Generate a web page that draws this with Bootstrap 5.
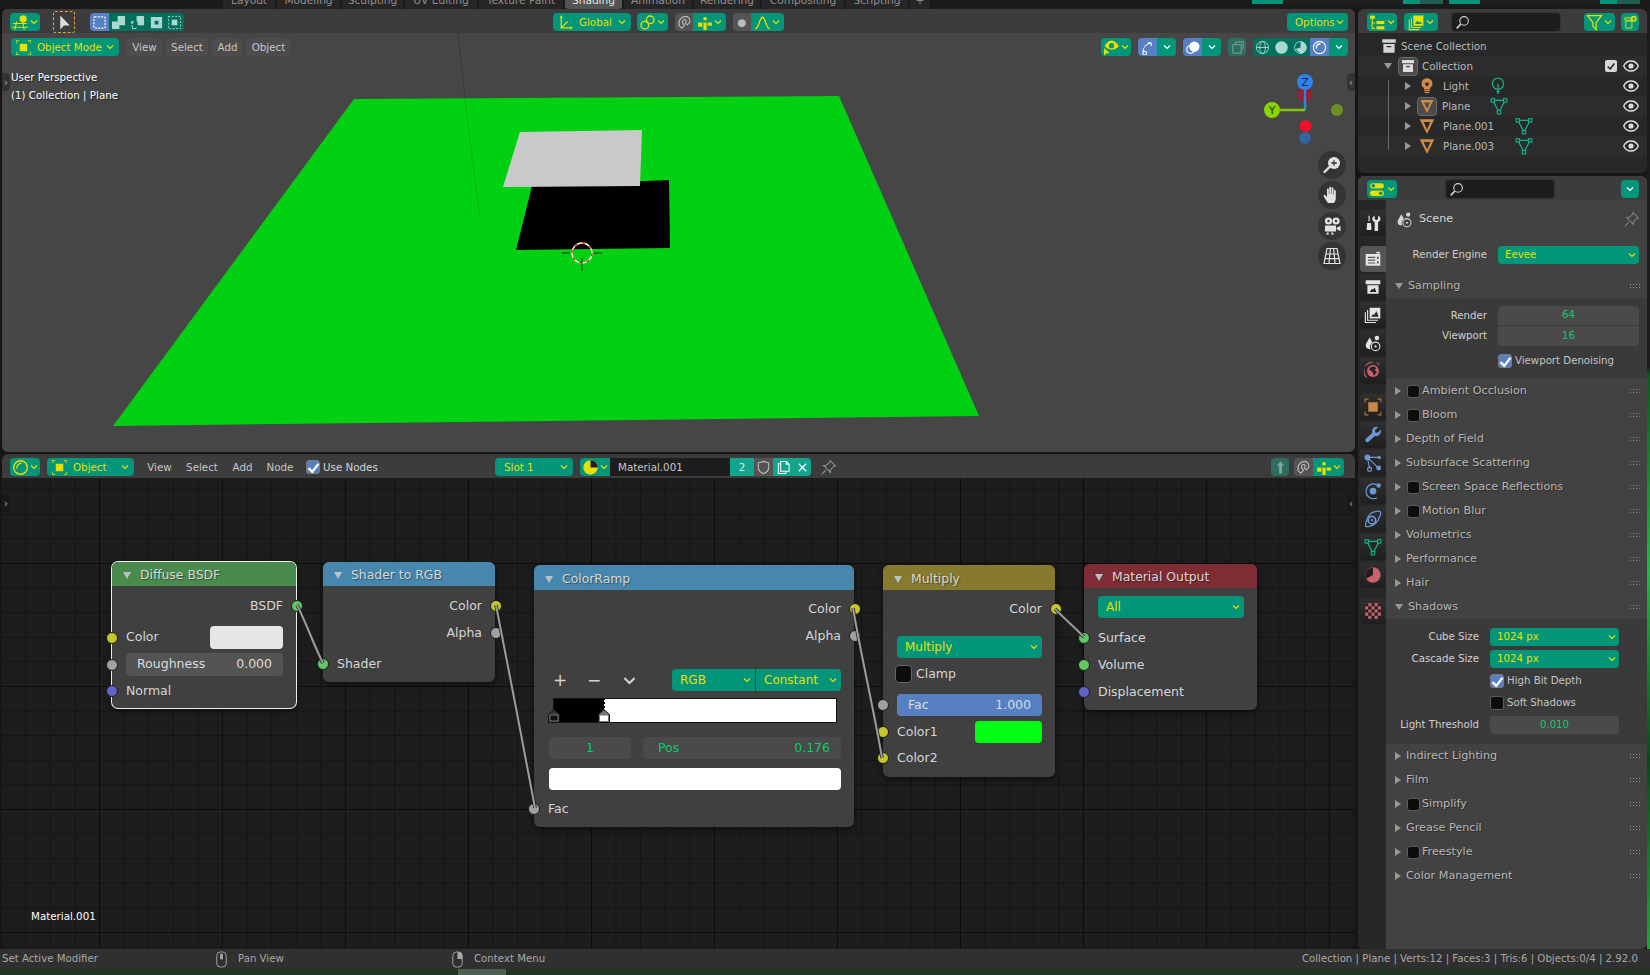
<!doctype html>
<html lang="en">

<head>
    <meta charset="utf-8">
    <title>Blender - Shading</title>
    <link href="https://cdn.jsdelivr.net/npm/bootstrap@5.3.5/dist/css/bootstrap.min.css" rel="stylesheet">
    <style>
        html, body { height: 100%; overflow: hidden; }
        body { background: #161616; font-family: "DejaVu Sans", sans-serif; font-size: 10.3px; color: #c4c4c4; line-height: 1; }
        .app { width: 1650px; height: 975px; }

        /* top bar */
        .topbar { height: 9px; background: #1b1b1b; overflow: hidden; position: relative; padding-left: 223px; }
        .wtab { height: 9px; display: flex; justify-content: center; align-items: flex-end; color: #8f8f8f; background: #262626; margin-right: 2px; border-radius: 0 0 3px 3px; padding-bottom: 3px; font-size: 10.6px; white-space: nowrap; }
        .wtab-on { background: #545454; color: #e2e2e2; }
        .tw1 { width: 52px; } .tw2 { width: 63px; } .tw3 { width: 61px; } .tw4 { width: 72px; } .tw5 { width: 84px; } .tw6 { width: 57px; } .tw7 { width: 68px; } .tw8 { width: 66px; } .tw9 { width: 82px; } .tw10 { width: 62px; }
        .scenebox { position: absolute; top: 0; height: 4px; display: flex; }
        .scb-a { left: 1252px; } .scb-b { left: 1449px; }
        .scenebox i { display: block; height: 4px; }
        .sc1 { width: 31px; background: #01967a; } .sc2 { width: 120px; background: #1d1d1d; } .sc3 { width: 17px; background: #01967a; } .sc4 { width: 23px; background: #1f5f50; }

        /* areas */
        .work { height: 940px; }
        .leftcol { width: 1353px; margin-left: 2px; margin-right: 3px; }
        .rightcol { width: 289px; }
        .edge-r { width: 3px; background: linear-gradient(#1c1c1c 0, #1c1c1c 38%, #0b5a1d 39%, #1bbd3f 60%, #0a4a18 80%, #1aa838 100%); }
        .area { border-radius: 6px; overflow: hidden; position: relative; }
        .a-view { height: 443px; background: #464646; }
        .a-node { height: 495px; margin-top: 2px; background: #1d1d1d; }
        .a-out { height: 164px; background: #282828; }
        .a-prop { height: 773px; margin-top: 3px; background: #424242; }
        .hd { height: 24px; padding-top: 4px; background: #3c3c3c; display: flex; align-items: flex-start; position: relative; }
        .row2 { height: 18px; margin-top: 5px; display: flex; align-items: center; position: relative; z-index: 2; }

        /* small header widgets */
        .tb { display: inline-flex; align-items: center; justify-content: center; height: 18px; background: #01967a; border-radius: 4px; color: #e8e000; flex: none; white-space: nowrap; }
        .tb-d { background: #006f5b; }
        .tb-dim { background: #2f6d60; color: #7fa89f; }
        .tb-b { background: #5680c2; color: #fff; }
        .tb-g { background: #545454; color: #bbb; }
        .tb-w { color: #fff; }
        .tb-l { border-radius: 4px 0 0 4px; }
        .tb-r { border-radius: 0 4px 4px 0; }
        .tb-m { border-radius: 0; }
        .spread { justify-content: space-between; padding: 0 4px 0 4px; }
        .spread span { margin-right: auto; margin-left: 5px; }
        .mn { display: inline-flex; align-items: center; justify-content: center; height: 18px; border-radius: 4px; color: #c6c6c6; background: #4c4c4c; flex: none; white-space: nowrap; }
        .mn-plain { background: transparent; }
        .ic { width: 17px; height: 17px; flex: none; display: block; }
        .ic-s { width: 15px; height: 15px; flex: none; display: block; }
        .chev { width: 10px; height: 10px; flex: none; display: block; }
        .sel-ic { color: #a8d8cf; }
        .curbox { width: 22px; height: 22px; margin-top: -2px; border: 1px dashed #e8a33a; border-radius: 2px; display: flex; align-items: center; justify-content: center; flex: none; color: #ddd; }

        /* widths and gaps between header widgets */
        .w18 { width: 18px; } .w19 { width: 19px; } .w20 { width: 20px; } .w24 { width: 24px; } .w30 { width: 30px; } .w31 { width: 31px; } .w33 { width: 33px; } .w34 { width: 34px; } .w37 { width: 37px; } .w38 { width: 38px; } .w42 { width: 42px; } .w45 { width: 45px; } .w58 { width: 58px; } .w61 { width: 61px; } .w78 { width: 78px; } .w87 { width: 87px; } .w108 { width: 108px; }
        .ml3 { margin-left: 3px; } .ml4 { margin-left: 4px; } .ml5 { margin-left: 5px; } .ml6 { margin-left: 6px; } .ml7 { margin-left: 7px; } .ml8 { margin-left: 8px; } .ml9 { margin-left: 9px; } .ml13 { margin-left: 13px; } .ml15 { margin-left: 15px; }
        .ml369 { margin-left: 369px; } .pl8 { padding-left: 8px; } .pl9 { padding-left: 9px; }
        .mr6 { margin-right: 6px; }
        .options-b { margin-left: 503px; padding-left: 8px; }
        .vis-b { margin-left: 810px; }
        .slot-b { width: 78px; margin-left: 114px; }
        .slot-b span { margin-left: 5px; }
        .use-l { justify-content: flex-start; color: #d4d4d4; }
        .matname { width: 120px; height: 18px; background: #1d1d1d; color: #c8c8c8; display: flex; align-items: center; padding-left: 8px; flex: none; }
        .num-u { background: #12a58c; color: #d8f0ea; }
        .mat-b { background: #12a58c; color: #fff; }
        .pin-c { color: #8a8a8a; }
        .up-b { margin-left: 434px; }
        .filt-b { margin-left: 23px; }
        .prop-s { margin-left: 48px; }
        .prop-c { margin-left: 66px; }

        .vtext { position: absolute; left: 9px; top: 59px; color: #fff; line-height: 18px; z-index: 2; text-shadow: 1px 1px 1px rgba(0,0,0,.5); }
        .scene3d { position: absolute; left: 0; top: 0; width: 1356px; height: 443px; }
        .navbtns { position: absolute; left: 1316px; top: 142px; z-index: 2; display: flex; flex-direction: column; gap: 2.4px; }
        .navb { width: 28px; height: 28px; border-radius: 50%; background: #343434; display: flex; align-items: center; justify-content: center; color: #e2e2e2; }
        .navb svg { width: 20px; height: 20px; display: block; }
        .sidetab { position: absolute; width: 8px; height: 18px; background: #333; color: #aaa; display: flex; align-items: center; justify-content: center; font-size: 11px; z-index: 2; }
        .st-l { left: 0; border-radius: 0 4px 4px 0; }
        .st-r { right: 0; border-radius: 4px 0 0 4px; }
        .st-v { top: 64px; }
        .st-n { top: 16px; background: #191919; }

        /* node editor */
        .canvas { position: absolute; left: 0; top: 24px; right: 0; bottom: 0; background-color: #1d1d1d;
            background-image: linear-gradient(#0d0d0d 1px, transparent 1px), linear-gradient(90deg, #0d0d0d 1px, transparent 1px), linear-gradient(#141414 1px, transparent 1px), linear-gradient(90deg, #141414 1px, transparent 1px);
            background-size: 123px 123px, 123px 123px, 24.6px 24.6px, 24.6px 24.6px;
            background-position: 0 85px, 97px 0, 0 11.2px, 23.2px 0; }
        .links { position: absolute; left: 0; top: 0; width: 1356px; height: 471px; z-index: 2; }
        .nd { position: absolute; background: #404040; border-radius: 6px; box-shadow: 0 2px 7px rgba(0,0,0,.55); font-size: 12.5px; color: #d6d6d6; z-index: 1; }
        .nd-sel { box-shadow: 0 0 0 1px #e8efe8, 0 2px 7px rgba(0,0,0,.55); }
        .nh { display: flex; align-items: center; color: #d8d8d8; padding-left: 11px; padding-top: 3px; border-radius: 6px 6px 0 0; font-size: 12.4px; text-shadow: 1px 1px 1px rgba(0,0,0,.4); }
        .nh24 { height: 24px; } .nh25 { height: 25px; }
        .tri-nd { width: 0; height: 0; border-left: 4.5px solid transparent; border-right: 4.5px solid transparent; border-top: 7px solid #b6c2c6; margin-right: 9px; flex: none; }
        .hg { background: #4a8a4c; } .hb { background: #4786ad; } .hy { background: #857a2d; } .hr { background: #7f2c35; }
        .nr { position: relative; height: 22px; display: flex; align-items: center; padding: 0 13px 0 14px; }
        .nr-end { justify-content: flex-end; }
        .sock { position: absolute; width: 12px; height: 12px; border-radius: 50%; border: 1px solid #1c1c1c; top: 50%; margin-top: -6px; z-index: 3; }
        .sl { left: -6px; } .sr { right: -7px; }
        .sy { background: #c7c729; } .sg { background: #a1a1a1; } .sb { background: #6363c7; } .sn { background: #63c763; }
        .nd-diff { left: 110px; top: 84px; width: 184px; height: 146px; }
        .nd-s2r { left: 321px; top: 84px; width: 172px; height: 120px; }
        .nd-ramp { left: 532px; top: 87px; width: 320px; height: 262px; }
        .nd-mul { left: 881px; top: 87px; width: 172px; height: 212px; }
        .nd-mat { left: 1082px; top: 86px; width: 173px; height: 146px; }
        .pt9 { padding-top: 9px; } .pt8 { padding-top: 8px; } .pt7 { padding-top: 7px; }
        .mt4p { margin-top: 4px; } .mt5p { margin-top: 5px; } .mt6p { margin-top: 6px; } .mt7p { margin-top: 7px; } .mt8p { margin-top: 8px; } .mt9p { margin-top: 9px; } .mt10p { margin-top: 10px; } .mt11p { margin-top: 11px; } .mt14p { margin-top: 14px; } .mt16p { margin-top: 16px; } .mt22p { margin-top: 22px; } .mt2n { margin-top: 2px; }
        .swatch { margin-left: auto; border-radius: 4px; height: 100%; }
        .sw-w { width: 73px; background: #e6e6e6; }
        .sw-g { width: 67px; background: #00ff12; }
        .h23 { height: 23px; }
        .fld { flex: 1; display: flex; justify-content: space-between; align-items: center; height: 100%; padding: 0 11px; background: #545454; border-radius: 4px; color: #dcdcdc; }
        .fld-b { background: #5680c2; }
        .fld-g { background: #4a4a4a; color: #12c86e; }
        .nsel { display: flex; align-items: center; justify-content: space-between; height: 22px; background: #01967a; color: #e8e000; border-radius: 4px; padding: 0 3px 0 8px; flex: 1; font-size: 12px; }
        .rampbtns { height: 23px; display: flex; align-items: center; padding: 0 13px 0 19px; color: #d2d2d2; }
        .rb { width: 34px; font-size: 17px; display: flex; justify-content: flex-start; }
        .rampsel { display: flex; margin-left: auto; height: 23px; }
        .rs1 { width: 83px; border-radius: 4px 0 0 4px; margin-right: 1px; flex: none; }
        .rs2 { width: 85px; border-radius: 0 4px 4px 0; flex: none; }
        .ramp { height: 25px; margin-left: 19px; margin-right: 17px; position: relative; background: linear-gradient(90deg, #000 0, #000 50px, #fff 50px); border: 1px solid #111; }
        .ramp-handles { position: absolute; left: -6px; top: -1px; height: 25px; width: 296px; }
        .rampfields { height: 22px; display: flex; padding: 0 13px 0 15px; gap: 12px; }
        .rf1 { width: 82px; flex: none; justify-content: center; }
        .pos-f { flex: 1; padding: 0 11px 0 15px; }
        .whitebar { height: 22px; margin-left: 15px; margin-right: 13px; background: #fff; border-radius: 4px; }
        .clamp { height: 18px; padding-left: 12px; }
        .cb-n { width: 17px; height: 18px; background: #0d0d0d; border: 1px solid #666; border-radius: 4px; margin-right: 4px; flex: none; }
        .mb-name { position: absolute; left: 29px; top: 433px; color: #fff; z-index: 2; }

        /* outliner */
        .ol-rows { padding-top: 3px; position: relative; }
        .ol { height: 20px; display: flex; align-items: center; position: relative; color: #b9b9b9; }
        .ol .ic { width: 18px; height: 18px; }
        .ol-alt { background: #2c2c2c; }
        .ol-s { padding-left: 22px; }
        .ol-a { padding-left: 26px; }
        .ol-c { padding-left: 47px; }
        .tri-r { width: 0; height: 0; border-top: 4.5px solid transparent; border-bottom: 4.5px solid transparent; border-left: 6px solid #999; flex: none; }
        .tri-d { width: 0; height: 0; border-left: 4.5px solid transparent; border-right: 4.5px solid transparent; border-top: 6px solid #999; flex: none; }
        .hl-ic { width: 20px; height: 19px; border-radius: 4px; background: #4b4b4b; border: 1px solid #6b6b6b; display: flex; align-items: center; justify-content: center; flex: none; color: #ddd; }
        .hl-ic .ic-s { width: 16px; height: 16px; }
        .on1 { width: 33px; } .on2 { width: 35px; } .on3 { width: 59px; }
        .ol .ol-end { position: absolute; left: 264px; top: 1px; color: #dcdcdc; }
        .ol-chk { position: absolute; left: 247px; top: 4px; width: 12px; height: 12px; background: #d8d8d8; border-radius: 2px; color: #222; display: flex; align-items: center; justify-content: center; }
        .ol-line { position: absolute; left: 30px; top: 47px; height: 70px; width: 1px; background: #6a6a6a; }
        .o-plane { color: #d18a45; } .o-mesh { color: #12b48c; }
        .wht { color: #d4d4d4; }
        .srch { background: #1d1d1d; border: 1px solid #333; border-radius: 4px; height: 20px; margin-top: -1px; display: flex; align-items: center; padding-left: 3px; color: #d2d2d2; flex: none; width: 110px; }

        /* properties */
        .propbody { height: 749px; display: flex; }
        .tabs { width: 28px; flex: none; background: #272727; padding-top: 10px; padding-left: 2px; }
        .pt { width: 26px; height: 26px; margin-bottom: 2px; background: linear-gradient(#2f2f2f, #1f1f1f); border-radius: 4px 0 0 4px; display: flex; align-items: center; justify-content: center; color: #e4e4e4; }
        .pt .ic { width: 18px; height: 18px; }
        .pt-on { background: #545454; }
        .pt-g { margin-bottom: 10px; }
        .c-blue { color: #6d97d6; } .c-red { color: #c9606c; } .c-org { color: #c98748; } .c-tl { color: #12b48c; }
        .pc { flex: 1; background: #424242; color: #c4c4c4; font-size: 10.2px; padding-top: 1px; }
        .ctx { height: 36px; display: flex; align-items: center; padding-left: 10px; color: #d4d4d4; font-size: 11.2px; }
        .ctx span { margin-left: 6px; }
        .ctx .pinr { margin-left: auto; margin-right: 7px; color: #7d7d7d; }
        .pr { display: flex; align-items: center; height: 18px; }
        .lb { text-align: right; flex: none; margin-right: 11px; color: #d0d0d0; }
        .lb-a { width: 101px; }
        .lb-b { width: 93px; }
        .sel-a { width: 141px; }
        .sel-b { width: 129px; }
        .psel { height: 18px; background: #01967a; color: #e8e000; border-radius: 4px; display: flex; align-items: center; justify-content: space-between; padding: 0 2px 0 7px; flex: none; }
        .ph { height: 24px; display: flex; align-items: center; padding-left: 9px; color: #b6b6b6; font-size: 11.2px; text-shadow: 1px 1px 1px rgba(0,0,0,.35); }
        .ph .tri-r, .ph .tri-d { margin-right: 5px; }
        .grip { margin-left: auto; margin-right: 7px; width: 11px; height: 6px; flex: none; background-image: radial-gradient(circle, #8a8a8a 0.9px, transparent 1px); background-size: 3px 3px; }
        .ck { width: 13px; height: 13px; background: #0d0d0d; border: 1px solid #5c5c5c; border-radius: 3px; margin-left: 1px; margin-right: 2px; flex: none; }
        .cka { width: 14px; height: 14px; background: #5680c2; border: 1px solid #7a7a7a; border-radius: 3px; display: flex; align-items: center; justify-content: center; color: #fff; flex: none; margin-right: 3px; }
        .ckoff { width: 14px; height: 14px; background: #0d0d0d; border: 1px solid #5c5c5c; border-radius: 3px; flex: none; margin-right: 3px; }
        .pb { background: #3a3a3a; }
        .pb-s { height: 81px; padding-top: 8px; }
        .pb-h { height: 125px; padding-top: 9px; }
        .numbox { width: 141px; height: 40px; flex: none; border-radius: 4px; background: #4a4a4a; color: #12c86e; display: flex; flex-direction: column; }
        .numbox div { height: 20px; display: flex; align-items: center; justify-content: center; }
        .numbox div:first-child { border-bottom: 1px solid #3a3a3a; }
        .nl { width: 101px; flex: none; margin-right: 11px; text-align: right; color: #d0d0d0; line-height: 20px; }
        .gr { display: flex; }
        .ind-a { padding-left: 112px; }
        .ind-b { padding-left: 104px; }
        .numsm { width: 129px; height: 18px; background: #4a4a4a; color: #12c86e; border-radius: 4px; display: flex; align-items: center; justify-content: center; flex: none; }
        .mt4b { margin-top: 4px; }
        .mt6b { margin-top: 6px; }

        /* status bar */
        .status { height: 20px; background: #303030; color: #a8a8a8; font-size: 10.2px; display: flex; align-items: center; padding-left: 2px; padding-top: 1px; }
        .st-right { margin-left: auto; margin-right: 12px; }
        .st1 { width: 211px; } .st2 { width: 211px; }
        .stic { width: 25px; color: #a8a8a8; }
        .desk { height: 6px; background: #1f3520; position: relative; }
        .desk-p { position: absolute; left: 458px; top: 0; width: 48px; height: 6px; background: #4c6151; }
    </style>
</head>

<body>
    <svg width="0" height="0" class="position-absolute">
        <defs>
            <symbol id="i-chev" viewBox="0 0 10 10"><path d="M2 3.5 5 6.5 8 3.5" fill="none" stroke="currentColor" stroke-width="1.2" /></symbol>
            <symbol id="i-3d" viewBox="0 0 16 16"><g fill="none" stroke="currentColor" stroke-width="1"><path d="M1 9h13M0 12.500h15M4.500 7 2.500 15M10 7l1.500 8" /></g><circle cx="10.500" cy="4.500" r="3.400" fill="currentColor" /></symbol>
            <symbol id="i-arrow" viewBox="0 0 16 16"><path d="M4 1.500v13l3.500-3.600H13z" fill="currentColor" /></symbol>
            <symbol id="i-s1" viewBox="0 0 16 16"><rect x="2" y="2" width="12" height="12" rx="1" fill="none" stroke="currentColor" stroke-width="1.300" stroke-dasharray="2 1.400" /></symbol>
            <symbol id="i-s2" viewBox="0 0 16 16"><path d="M7 1h8v10H9v4H1V7h6z" fill="currentColor" /></symbol>
            <symbol id="i-s3" viewBox="0 0 16 16"><path d="M7 1h8v10H8V7H7z" fill="currentColor" /><path d="M1.500 7h2v1.200h-1v1h-1zM1.500 11h1v3.500h4v-1" fill="none" stroke="currentColor" /></symbol>
            <symbol id="i-s4" viewBox="0 0 16 16"><path d="M2 2h12v12H2zM6 6v4h4V6z" fill="currentColor" fill-rule="evenodd" /></symbol>
            <symbol id="i-s5" viewBox="0 0 16 16"><rect x="1.500" y="1.500" width="13" height="13" fill="none" stroke="currentColor" stroke-dasharray="2 1.600" /><rect x="5" y="5" width="6" height="6" fill="currentColor" /></symbol>
            <symbol id="i-axes" viewBox="0 0 16 16"><path d="M4 2v11h10M4 13l6-6" fill="none" stroke="currentColor" stroke-width="1.200" /><path d="M2.500 3.500 4 1l1.500 2.500zM12.500 11.500 15 13l-2.500 1.500z" fill="currentColor" /></symbol>
            <symbol id="i-link" viewBox="0 0 16 16"><g fill="none" stroke="currentColor" stroke-width="1.300"><circle cx="5.500" cy="10.500" r="3.600" /><circle cx="10.500" cy="5.500" r="3.600" /></g></symbol>
            <symbol id="i-mag" viewBox="0 0 16 16"><path d="M5 14 2.500 11.500C0.500 6 5 1.500 9 1.500c3.500 0 5.500 3 4.500 6.500L11 10.500 8.800 8.500c1.500-1.500 1.200-3.500-.3-3.700C6.500 4.600 5 7 6.200 9L8 11z" fill="none" stroke="currentColor" stroke-width="1.200" /></symbol>
            <symbol id="i-snap" viewBox="0 0 16 16"><g fill="currentColor"><rect x="2" y="8" width="4" height="4" /><rect x="7" y="3" width="3" height="3" /><rect x="7" y="8" width="3" height="7" /><rect x="11" y="8" width="4" height="3" /></g></symbol>
            <symbol id="i-curve" viewBox="0 0 16 16"><path d="M1 14C5 14 5 3 8 3s3 11 7 11" fill="none" stroke="currentColor" stroke-width="1.300" /></symbol>
            <symbol id="i-objmode" viewBox="0 0 16 16"><rect x="4.500" y="4.500" width="7" height="7" fill="currentColor" /><path d="M1.500 4V1.500H4M12 1.500h2.500V4M14.500 12v2.500H12M4 14.500H1.500V12" fill="none" stroke="currentColor" stroke-opacity=".75" /></symbol>
            <symbol id="i-vis" viewBox="0 0 16 16"><path d="M8 1.500C11 1.500 14 5 15 6.500 13.500 8.500 11 10 8 10S3 8 1.500 6.500C3 4.500 5.500 1.500 8 1.500zM8 3.800a2.500 2.500 0 1 0 0 5 2.500 2.500 0 0 0 0-5z" fill="currentColor" fill-rule="evenodd" /><path d="M1 8.500v7.200l2.200-2.200 3.200-.2z" fill="currentColor" /></symbol>
            <symbol id="i-giz" viewBox="0 0 16 16"><path d="M3 14C3 8 7 4 12 3M12 3H8.500M12 3v3.500M3 14a2 2 0 1 0 0-.1" fill="none" stroke="currentColor" stroke-width="1.100" /></symbol>
            <symbol id="i-over" viewBox="0 0 16 16"><path d="M10 1.500a5.500 5.500 0 1 1 0 11 5.500 5.500 0 0 1 0-11z" fill="currentColor" /><circle cx="6" cy="10" r="4.200" fill="none" stroke="currentColor" stroke-width="1.200" /></symbol>
            <symbol id="i-xray" viewBox="0 0 16 16"><path d="M6 2h8v8M6 2v2M3 5h9v9H3z" fill="none" stroke="currentColor" /></symbol>
            <symbol id="i-wire" viewBox="0 0 16 16"><g fill="none" stroke="currentColor" stroke-width="1"><circle cx="8" cy="8" r="6.500" /><ellipse cx="8" cy="8" rx="3" ry="6.500" /><path d="M1.500 8h13" /></g></symbol>
            <symbol id="i-solid" viewBox="0 0 16 16"><circle cx="8" cy="8" r="6.700" fill="currentColor" /></symbol>
            <symbol id="i-look" viewBox="0 0 16 16"><circle cx="8" cy="8" r="6.300" fill="none" stroke="currentColor" /><path d="M8 1.700a6.300 6.300 0 0 1 0 12.600L2.600 9.500 8 8z" fill="currentColor" /></symbol>
            <symbol id="i-rend" viewBox="0 0 16 16"><circle cx="8" cy="8" r="6.500" fill="none" stroke="currentColor" stroke-width="1.200" /><path d="M4.500 9c0-3 2-5 4.500-5" fill="none" stroke="currentColor" stroke-width="1.400" /></symbol>
            <symbol id="i-zoom" viewBox="0 0 20 20"><circle cx="12" cy="8" r="6" fill="currentColor" /><path d="M7.500 12 2.500 17" stroke="currentColor" stroke-width="2.400" stroke-linecap="round" /><path d="M9.200 8h5.600M12 5.200v5.600" stroke="#343434" stroke-width="1.300" /></symbol>
            <symbol id="i-hand" viewBox="0 0 20 20"><path d="M6 18C4 15 2.500 13 1.800 11.200c-.5-1.500 1-2 1.800-.8L5 12.200V4.500c0-1.400 1.800-1.400 1.800 0V9h.5V2.800c0-1.400 1.900-1.400 1.900 0V9h.5V3.600c0-1.400 1.800-1.400 1.800 0V9.500h.5V6c0-1.300 1.800-1.300 1.800 0v7c0 2.500-1 4-2 5z" fill="currentColor" /></symbol>
            <symbol id="i-cam" viewBox="0 0 20 20"><circle cx="6.500" cy="5" r="3.600" fill="currentColor" /><circle cx="14" cy="5" r="3.600" fill="currentColor" /><circle cx="6.500" cy="5" r="1.200" fill="#343434" /><circle cx="14" cy="5" r="1.200" fill="#343434" /><path d="M3 9.500h11v6H3zM14.500 12l4-2.300v5.600l-4-2.300zM6 15.500l-2 3h3zM10 15.500l2 3H9z" fill="currentColor" /></symbol>
            <symbol id="i-persp" viewBox="0 0 20 20"><g fill="none" stroke="currentColor" stroke-width="1.200"><path d="M5 2.500h10l3 15H2z" /><path d="M3.700 8h12.600M2.900 12.700h14.200M8.400 2.500 7 17.500M11.600 2.500 13 17.500" /></g></symbol>
            <symbol id="i-outl" viewBox="0 0 16 16"><rect x="1" y="1.500" width="4.500" height="3" fill="currentColor" /><path d="M3 4.500v9h2.500M3 8.500h2.500" fill="none" stroke="currentColor" /><rect x="7" y="6.500" width="7.500" height="3" fill="currentColor" /><rect x="7" y="11.500" width="7.500" height="3" fill="currentColor" /></symbol>
            <symbol id="i-disp" viewBox="0 0 16 16"><path d="M5 1.500h9.500V11H5z" fill="currentColor" /><path d="M6.500 9.500 9 6l1.500 2 1-1 1.500 2.500z" fill="#01967a" /><path d="M3.200 3.500v9.200h9.300M1.200 5.500v9.200h9.300" fill="none" stroke="currentColor" stroke-width="1" /></symbol>
            <symbol id="i-filter" viewBox="0 0 16 16"><path d="M1.500 1.500h13L9.500 8v6.500l-3-3V8z" fill="none" stroke="currentColor" stroke-width="1.200" /></symbol>
            <symbol id="i-newc" viewBox="0 0 16 16"><path d="M2 3h7v2.500H2zM3 6.500h6.500v7.500H3z" fill="none" stroke="currentColor" /><circle cx="11.500" cy="4" r="3.200" fill="currentColor" /><path d="M9.800 4h3.400M11.500 2.300v3.400" stroke="#01967a" /></symbol>
            <symbol id="i-coll" viewBox="0 0 16 16"><path d="M2 2h12v3.200H2zM3 6.200h10V14H3zM6 8v1.200h4V8z" fill="currentColor" fill-rule="evenodd" /></symbol>
            <symbol id="i-bulb" viewBox="0 0 16 16"><path d="M8 1a4.800 4.800 0 0 1 2.800 8.700V11H5.200V9.700A4.800 4.800 0 0 1 8 1zM6 5l1.200 3h1.600L10 5" fill="currentColor" fill-rule="evenodd" /><path d="M5.500 12.200h5M6 13.800h4" stroke="currentColor" stroke-width="1.100" /></symbol>
            <symbol id="i-tri" viewBox="0 0 16 16"><path d="M1.500 2h13L8 15zM5 4.500 8 11l3-6.500z" fill="currentColor" fill-rule="evenodd" /></symbol>
            <symbol id="i-mesh" viewBox="0 0 16 16"><path d="M2.500 3h11L8 13.500z" fill="none" stroke="currentColor" stroke-width="1.100" /><g fill="#282828" stroke="currentColor" stroke-width="1"><rect x="1" y="1.500" width="3" height="3" /><rect x="12" y="1.500" width="3" height="3" /><rect x="6.500" y="12" width="3" height="3" /></g></symbol>
            <symbol id="i-meshl" viewBox="0 0 16 16"><circle cx="8" cy="6" r="5" fill="none" stroke="currentColor" stroke-width="1.100" /><path d="M8 6v9M6.500 13h3" stroke="currentColor" stroke-width="1.100" /></symbol>
            <symbol id="i-eye" viewBox="0 0 16 16"><path d="M1.500 8C3 4.800 5.500 3.500 8 3.500s5 1.300 6.500 4.500C13 11.200 10.500 12.500 8 12.500S3 11.200 1.500 8z" fill="none" stroke="currentColor" stroke-width="1.300" /><circle cx="8" cy="8" r="2.300" fill="currentColor" /></symbol>
            <symbol id="i-check" viewBox="0 0 12 12"><path d="M2 6.500 5 9.500 10 3" fill="none" stroke="currentColor" stroke-width="1.800" /></symbol>
            <symbol id="i-props" viewBox="0 0 16 16"><rect x="1" y="2" width="13" height="5" rx="2.500" fill="currentColor" /><rect x="1" y="9" width="13" height="5" rx="2.500" fill="currentColor" /><circle cx="4" cy="4.500" r="1.700" fill="#01967a" /><circle cx="11" cy="11.500" r="1.700" fill="#01967a" /></symbol>
            <symbol id="i-search" viewBox="0 0 16 16"><circle cx="9.700" cy="6.300" r="4.600" fill="none" stroke="currentColor" stroke-width="1.200" /><path d="M6.200 9.800 1.800 14.200" stroke="currentColor" stroke-width="1.700" /></symbol>
            <symbol id="i-pin" viewBox="0 0 16 16"><path d="M9.500 1.500 14.500 6.500 12.700 7 9.800 10.500 9.800 12.500 3.500 6.200 5.500 6.200 9 3.300zM5.500 10.500 1.500 14.500" fill="none" stroke="currentColor" stroke-width="1.100" /></symbol>
            <symbol id="i-tool" viewBox="0 0 16 16"><path d="M4 1.500h1v5H4zM2.800 8h3.400l.5 5.500c0 1-4.400 1-4.400 0z" fill="currentColor" /><path d="M9.500 1.500v3l1.500 1 1.500-1v-3c1.700.7 2.500 2 2 3.600-.3 1-1 1.600-2 2V15h-3V7.100c-1-.4-1.700-1.100-2-2.100-.4-1.500.3-2.900 2-3.500z" fill="currentColor" /></symbol>
            <symbol id="i-render" viewBox="0 0 16 16"><path d="M1.500 3.500h13V14h-13zM3.500 6v1h6.500V6zM3.500 8.500v1h6.500v-1zM3.500 11v1h6.500v-1zM11.500 6v2h1.500V6zM11.500 10v2h1.500v-2z" fill="currentColor" fill-rule="evenodd" /><path d="M11 1.500h3V3h-3z" fill="currentColor" /></symbol>
            <symbol id="i-output" viewBox="0 0 16 16"><path d="M1.500 2h13v3.500h-13zM3 6.500h10V14H3zM5 12.500h6L9.500 8.500 8 10.500 7 9.500z" fill="currentColor" fill-rule="evenodd" /></symbol>
            <symbol id="i-vlayer" viewBox="0 0 16 16"><path d="M5 1.500h9.500V11H5zM6.500 9.500H13L11 4.500 9 8 8 7z" fill="currentColor" fill-rule="evenodd" /><path d="M3.200 3.500v9.200h9.300M1.200 5.500v9.200h9.300" fill="none" stroke="currentColor" /></symbol>
            <symbol id="i-scene" viewBox="0 0 16 16"><path d="M5 3C3.500 6 1.500 8 1.500 10.300c0 1.700 1.500 3.200 3.300 3.200.4 0 .6-.1.900-.2A5 5 0 0 1 7.500 7.500z" fill="currentColor" /><circle cx="11.500" cy="3.500" r="2" fill="currentColor" /><circle cx="10.300" cy="11" r="3.800" fill="none" stroke="currentColor" /><circle cx="10.300" cy="11" r="1" fill="currentColor" /></symbol>
            <symbol id="i-world" viewBox="0 0 16 16"><circle cx="8" cy="8" r="5.300" fill="currentColor" /><path d="M4.500 6.500c1 2 2.500 1 3 2.500 1 .5 0 2 1.500 3 1.200-1 1.200-2.200 2.500-3-1-1.300-1.800-1-2.200-1.800.4-.8 1.200-.8 1.700-1.700-1.300-1.300-3.500-1.500-5-.8z" fill="#222" /><path d="M2.300 13.700A7.500 7.500 0 0 1 13.700 2.300" fill="none" stroke="currentColor" stroke-width=".9" stroke-dasharray="8 3" /></symbol>
            <symbol id="i-obj" viewBox="0 0 16 16"><rect x="3.800" y="3.800" width="8.400" height="8.400" fill="currentColor" /><path d="M1 4V1h3M12 1h3v3M15 12v3h-3M4 15H1v-3" fill="none" stroke="currentColor" stroke-opacity=".8" /></symbol>
            <symbol id="i-wrench" viewBox="0 0 16 16"><path d="M15 3.200 12.200 6 10 5.800 9.700 3.600 12.500 1C10 .2 7.500 1.500 7.200 4.200c0 .7 0 1.200.2 1.800L1.500 11.500c-1 1.200.2 3.600 2.100 2.900l6-5.600c.7.200 1.500.3 2.200.1 2.300-.6 3.800-3.300 3.200-5.700z" fill="currentColor" /></symbol>
            <symbol id="i-part" viewBox="0 0 16 16"><circle cx="3" cy="3" r="2.500" fill="currentColor" /><circle cx="5" cy="13.500" r="1.800" fill="none" stroke="currentColor" /><circle cx="13" cy="12.500" r="2.200" fill="currentColor" /><circle cx="13.500" cy="3" r="1.500" fill="currentColor" /><path d="M3 3h10M3 3l2 10M3 3l10 9.500" stroke="currentColor" /></symbol>
            <symbol id="i-phys" viewBox="0 0 16 16"><path d="M11.500 14a6.500 6.500 0 1 1-.2-11.500" fill="none" stroke="currentColor" stroke-width="1.100" /><circle cx="8" cy="8" r="3" fill="currentColor" /><circle cx="13" cy="3" r="2" fill="currentColor" /></symbol>
            <symbol id="i-cons" viewBox="0 0 16 16"><path d="M1.500 14.500C1 12 3 5.500 6 3c3-2 8-2.500 8.500-1.500 1 1-1 7-4 10-2.500 2.500-8 4-9 3z" fill="none" stroke="currentColor" stroke-width="1.100" /><circle cx="7" cy="9" r="3.300" fill="none" stroke="currentColor" stroke-width="1.500" /><circle cx="7" cy="9" r="1" fill="currentColor" /></symbol>
            <symbol id="i-mat" viewBox="0 0 16 16"><circle cx="8" cy="8" r="6.800" fill="currentColor" /><path d="M8 8V1.300A6.800 6.800 0 0 0 2 11z" fill="#1e1e1e" /></symbol>
            <symbol id="i-tex" viewBox="0 0 16 16"><rect x="1" y="1" width="14" height="14" fill="currentColor" /><path d="M1 1h2.800v2.800H1zM6.600 1h2.800v2.800H6.600zM12.200 1H15v2.800h-2.800zM3.800 3.800h2.800v2.800H3.800zM9.400 3.800h2.800v2.800H9.400zM1 6.600h2.800v2.800H1zM6.600 6.600h2.800v2.800H6.600zM12.200 6.600H15v2.800h-2.800zM3.800 9.400h2.800v2.800H3.800zM9.400 9.400h2.800v2.800H9.400zM1 12.200h2.800V15H1zM6.600 12.200h2.800V15H6.600zM12.200 12.200H15V15h-2.800z" fill="#1e1e1e" /></symbol>
            <symbol id="i-shade" viewBox="0 0 16 16"><circle cx="8" cy="8" r="6.400" fill="none" stroke="currentColor" stroke-width="1.300" /><path d="M4.500 9C4.500 6 6.500 4 9 4" fill="none" stroke="currentColor" stroke-width="1.300" /></symbol>
            <symbol id="i-ball" viewBox="0 0 16 16"><circle cx="8" cy="8" r="6.800" fill="currentColor" /><path d="M8 8V1.200A6.800 6.800 0 0 1 14.800 8z" fill="#1e1e1e" /></symbol>
            <symbol id="i-shield" viewBox="0 0 16 16"><path d="M8 1.500 13.500 3v5c0 3-2.500 5.500-5.500 6.500C5 13.500 2.500 11 2.500 8V3z" fill="none" stroke="currentColor" stroke-width="1.200" /></symbol>
            <symbol id="i-copy" viewBox="0 0 16 16"><path d="M5 1.500h6L14 4.500V12H5zM11 1.500v3h3M5 4H2.500v10.500h8V12" fill="none" stroke="currentColor" stroke-width="1.100" /></symbol>
            <symbol id="i-x" viewBox="0 0 16 16"><path d="M4 4l8 8M12 4l-8 8" stroke="currentColor" stroke-width="1.300" /></symbol>
            <symbol id="i-up" viewBox="0 0 16 16"><path d="M8 1.500 12 6H9.500v8.500h-3V6H4z" fill="currentColor" /></symbol>
            <symbol id="i-mouse" viewBox="0 0 12 18"><rect x="1" y="1" width="10" height="16" rx="4" fill="none" stroke="currentColor" /><rect x="4.500" y="3" width="3" height="6" rx="1" fill="currentColor" /></symbol>
            <symbol id="i-mouser" viewBox="0 0 12 18"><rect x="1" y="1" width="10" height="16" rx="4" fill="none" stroke="currentColor" /><path d="M6 1h1a4 4 0 0 1 4 4v3.500H6z" fill="currentColor" /></symbol>
        </defs>
    </svg>

    <div class="app d-flex flex-column">
        <div class="topbar d-flex">
            <div class="wtab tw1">Layout</div>
            <div class="wtab tw2">Modeling</div>
            <div class="wtab tw3">Sculpting</div>
            <div class="wtab tw4">UV Editing</div>
            <div class="wtab tw5">Texture Paint</div>
            <div class="wtab wtab-on tw6">Shading</div>
            <div class="wtab tw7">Animation</div>
            <div class="wtab tw8">Rendering</div>
            <div class="wtab tw9">Compositing</div>
            <div class="wtab tw10">Scripting</div>
            <div class="wtab w20">+</div>
            <div class="scenebox scb-a"><i class="sc1"></i><i class="sc2"></i><i class="sc3"></i><i class="sc4"></i></div>
            <div class="scenebox scb-b"><i class="sc1"></i><i class="sc2"></i><i class="sc3"></i><i class="sc4"></i></div>
        </div>

        <div class="work d-flex">
            <div class="leftcol">
                <!-- 3D viewport -->
                <div class="area a-view">
                    <svg class="scene3d" viewBox="2 9 1356 443">
                        <path d="M458 33 465 99" stroke="#3a3a3a" stroke-width="1" fill="none" />
                        <polygon points="354,99 839,96 979,416 113,426" fill="#00d012" />
                        <path d="M465 99 480 218" stroke="#00b414" stroke-width="1" fill="none" />
                        <polygon points="532,186 669,180 670,248 516,250" fill="#000" />
                        <polygon points="520,132 642,130 640,186 503,187" fill="#c9c9c9" />
                        <g fill="none">
                            <circle cx="582" cy="253" r="10" stroke="#fff" stroke-width="1.300" />
                            <circle cx="582" cy="253" r="10" stroke="#e0301a" stroke-width="1.300" stroke-dasharray="3 4.800" />
                            <path d="M562 253h8M594 253h8M582 258v13" stroke="#0a3a10" stroke-width="1" />
                        </g>
                        <!-- gizmo -->
                        <circle cx="1305" cy="94" r="7.500" fill="#9a2230" />
                        <text x="1305" y="98" text-anchor="middle" font-size="11" fill="#6a1820">X</text>
                        <path d="M1305 110V90" stroke="#2f83e6" stroke-width="2.500" />
                        <path d="M1305 110H1280" stroke="#86c50e" stroke-width="2.500" />
                        <circle cx="1305" cy="82" r="8" fill="#2f83f0" />
                        <text x="1305" y="86" text-anchor="middle" font-size="11" fill="#102a50">Z</text>
                        <circle cx="1272" cy="110" r="8" fill="#8bd400" />
                        <text x="1272" y="114" text-anchor="middle" font-size="11" fill="#22380a">Y</text>
                        <circle cx="1337" cy="110" r="6" fill="#6f8f25" />
                        <circle cx="1305.500" cy="126" r="6" fill="#f0112b" />
                        <circle cx="1305" cy="138" r="6" fill="#33659f" />
                    </svg>
                    <div class="hd pl8">
                        <div class="tb w30"><svg class="ic"><use href="#i-3d" /></svg><svg class="chev"><use href="#i-chev" /></svg></div>
                        <div class="curbox ml13"><svg class="ic"><use href="#i-arrow" /></svg></div>
                        <div class="d-flex ml15">
                            <div class="tb tb-b tb-l w19"><svg class="ic-s"><use href="#i-s1" /></svg></div>
                            <div class="tb tb-d tb-m w19 sel-ic"><svg class="ic-s"><use href="#i-s2" /></svg></div>
                            <div class="tb tb-d tb-m w19 sel-ic"><svg class="ic-s"><use href="#i-s3" /></svg></div>
                            <div class="tb tb-d tb-m w18 sel-ic"><svg class="ic-s"><use href="#i-s4" /></svg></div>
                            <div class="tb tb-d tb-r w19 sel-ic"><svg class="ic-s"><use href="#i-s5" /></svg></div>
                        </div>
                        <div class="tb spread w78 ml369"><svg class="ic"><use href="#i-axes" /></svg><span>Global</span><svg class="chev"><use href="#i-chev" /></svg></div>
                        <div class="tb w31 ml6"><svg class="ic"><use href="#i-link" /></svg><svg class="chev"><use href="#i-chev" /></svg></div>
                        <div class="d-flex ml7">
                            <div class="tb tb-g tb-l w18"><svg class="ic-s"><use href="#i-mag" /></svg></div>
                            <div class="tb tb-r w33"><svg class="ic"><use href="#i-snap" /></svg><svg class="chev"><use href="#i-chev" /></svg></div>
                        </div>
                        <div class="d-flex ml7">
                            <div class="tb tb-g tb-l w18">&#9679;</div>
                            <div class="tb tb-r w33"><svg class="ic"><use href="#i-curve" /></svg><svg class="chev"><use href="#i-chev" /></svg></div>
                        </div>
                        <div class="tb spread w61 options-b">Options<svg class="chev"><use href="#i-chev" /></svg></div>
                    </div>
                    <div class="row2 pl9">
                        <div class="tb spread w108"><svg class="ic"><use href="#i-objmode" /></svg><span>Object Mode</span><svg class="chev"><use href="#i-chev" /></svg></div>
                        <div class="mn w37 ml7">View</div>
                        <div class="mn w42 ml3">Select</div>
                        <div class="mn w31 ml4">Add</div>
                        <div class="mn w45 ml3">Object</div>
                        <div class="tb w30 vis-b"><svg class="ic"><use href="#i-vis" /></svg><svg class="chev"><use href="#i-chev" /></svg></div>
                        <div class="d-flex ml7">
                            <div class="tb tb-b tb-l w19"><svg class="ic-s"><use href="#i-giz" /></svg></div>
                            <div class="tb tb-r tb-w w19"><svg class="chev"><use href="#i-chev" /></svg></div>
                        </div>
                        <div class="d-flex ml7">
                            <div class="tb tb-b tb-l w19"><svg class="ic-s"><use href="#i-over" /></svg></div>
                            <div class="tb tb-r tb-w w19"><svg class="chev"><use href="#i-chev" /></svg></div>
                        </div>
                        <div class="tb tb-dim w18 ml7"><svg class="ic-s"><use href="#i-xray" /></svg></div>
                        <div class="d-flex ml7">
                            <div class="tb tb-d tb-l w19 sel-ic"><svg class="ic-s"><use href="#i-wire" /></svg></div>
                            <div class="tb tb-d tb-m w19 sel-ic"><svg class="ic-s"><use href="#i-solid" /></svg></div>
                            <div class="tb tb-d tb-m w19 sel-ic"><svg class="ic-s"><use href="#i-look" /></svg></div>
                            <div class="tb tb-b tb-m w19"><svg class="ic-s"><use href="#i-rend" /></svg></div>
                            <div class="tb tb-r tb-w w19"><svg class="chev"><use href="#i-chev" /></svg></div>
                        </div>
                    </div>
                    <div class="vtext">User Perspective<br>(1) Collection | Plane</div>
                    <div class="sidetab st-l st-v">&#8250;</div>
                    <div class="sidetab st-r st-v">&#8249;</div>
                    <div class="navbtns">
                        <div class="navb"><svg><use href="#i-zoom" /></svg></div>
                        <div class="navb"><svg><use href="#i-hand" /></svg></div>
                        <div class="navb"><svg><use href="#i-cam" /></svg></div>
                        <div class="navb"><svg><use href="#i-persp" /></svg></div>
                    </div>
                </div>

                <!-- shader editor -->
                <div class="area a-node">
                    <div class="hd pl8">
                        <div class="tb w30"><svg class="ic"><use href="#i-shade" /></svg><svg class="chev"><use href="#i-chev" /></svg></div>
                        <div class="tb spread w87 ml7"><svg class="ic"><use href="#i-objmode" /></svg><span>Object</span><svg class="chev"><use href="#i-chev" /></svg></div>
                        <div class="mn mn-plain w37 ml7">View</div>
                        <div class="mn mn-plain w42 ml3">Select</div>
                        <div class="mn mn-plain w31 ml4">Add</div>
                        <div class="mn mn-plain w34 ml5">Node</div>
                        <div class="cka ml9 mt2n"><svg class="ic-s"><use href="#i-check" /></svg></div>
                        <div class="mn mn-plain use-l w58">Use Nodes</div>
                        <div class="tb spread slot-b"><span>Slot 1</span><svg class="chev"><use href="#i-chev" /></svg></div>
                        <div class="tb tb-l w30 ml7"><svg class="ic"><use href="#i-ball" /></svg><svg class="chev"><use href="#i-chev" /></svg></div>
                        <div class="matname">Material.001</div>
                        <div class="tb tb-m w24 num-u">2</div>
                        <div class="tb tb-g tb-m w19"><svg class="ic-s"><use href="#i-shield" /></svg></div>
                        <div class="tb tb-m w20 mat-b"><svg class="ic-s"><use href="#i-copy" /></svg></div>
                        <div class="tb tb-r w18 mat-b"><svg class="ic-s"><use href="#i-x" /></svg></div>
                        <div class="mn mn-plain w18 ml8 pin-c"><svg class="ic"><use href="#i-pin" /></svg></div>
                        <div class="tb tb-dim w18 up-b"><svg class="ic-s"><use href="#i-up" /></svg></div>
                        <div class="tb tb-g w19 ml5 tb-l"><svg class="ic-s"><use href="#i-mag" /></svg></div>
                        <div class="tb tb-r w31"><svg class="ic"><use href="#i-snap" /></svg><svg class="chev"><use href="#i-chev" /></svg></div>
                    </div>
                    <div class="canvas">
                        <svg class="links" viewBox="2 478 1356 471">
                            <g fill="none" stroke="#1c1c1c" stroke-width="3.500">
                                <path d="M297 605C305 620 315 648 323 663" />
                                <path d="M496 605C505 650 526 760 535 808" />
                                <path d="M853 608C860 650 875 716 882 758" />
                                <path d="M1055 609C1064 618 1075 628 1084 637" />
                            </g>
                            <g fill="none" stroke="#9c9c9c" stroke-width="2">
                                <path d="M297 605C305 620 315 648 323 663" />
                                <path d="M496 605C505 650 526 760 535 808" />
                                <path d="M853 608C860 650 875 716 882 758" />
                                <path d="M1055 609C1064 618 1075 628 1084 637" />
                            </g>
                        </svg>

                        <div class="nd nd-sel nd-diff">
                            <div class="nh nh24 hg"><i class="tri-nd"></i>Diffuse BSDF</div>
                            <div class="pt9">
                                <div class="nr nr-end">BSDF<i class="sock sr sn"></i></div>
                                <div class="nr h23 mt9p"><i class="sock sl sy"></i>Color<div class="swatch sw-w"></div></div>
                                <div class="nr h23 mt4p"><i class="sock sl sg"></i><div class="fld"><span>Roughness</span><span>0.000</span></div></div>
                                <div class="nr mt4p"><i class="sock sl sb"></i>Normal</div>
                            </div>
                        </div>

                        <div class="nd nd-s2r">
                            <div class="nh nh24 hb"><i class="tri-nd"></i>Shader to RGB</div>
                            <div class="pt9">
                                <div class="nr nr-end">Color<i class="sock sr sy"></i></div>
                                <div class="nr nr-end mt5p">Alpha<i class="sock sr sg"></i></div>
                                <div class="nr mt9p"><i class="sock sl sn"></i>Shader</div>
                            </div>
                        </div>

                        <div class="nd nd-ramp">
                            <div class="nh nh25 hb"><i class="tri-nd"></i>ColorRamp</div>
                            <div class="pt8">
                                <div class="nr nr-end">Color<i class="sock sr sy"></i></div>
                                <div class="nr nr-end mt5p">Alpha<i class="sock sr sg"></i></div>
                                <div class="rampbtns mt22p">
                                    <span class="rb">+</span><span class="rb">&#8722;</span>
                                    <svg class="ic"><use href="#i-chev" /></svg>
                                    <div class="rampsel">
                                        <div class="nsel rs1 h23">RGB<svg class="chev"><use href="#i-chev" /></svg></div>
                                        <div class="nsel rs2 h23">Constant<svg class="chev"><use href="#i-chev" /></svg></div>
                                    </div>
                                </div>
                                <div class="ramp mt6p">
                                    <svg class="ramp-handles" viewBox="0 0 296 25">
                                        <path d="M56.500 0v12" stroke="#000" stroke-dasharray="2 2" />
                                        <path d="M0.500 24.500v-8l5.500-5 5.500 5v8z" fill="#333" stroke="#111" />
                                        <path d="M2 23v-6h8v6z" fill="#111" stroke="#aaa" stroke-width=".6" />
                                        <path d="M50.500 24.500v-8l5.500-5 5.500 5v8z" fill="#777" stroke="#111" />
                                        <path d="M52 23v-5.500h8V23z" fill="#fff" />
                                    </svg>
                                </div>
                                <div class="rampfields mt14p">
                                    <div class="fld fld-g rf1">1</div>
                                    <div class="fld fld-g pos-f"><span>Pos</span><span>0.176</span></div>
                                </div>
                                <div class="whitebar mt9p"></div>
                                <div class="nr mt8p"><i class="sock sl sg"></i>Fac</div>
                            </div>
                        </div>

                        <div class="nd nd-mul">
                            <div class="nh nh25 hy"><i class="tri-nd"></i>Multiply</div>
                            <div class="pt8">
                                <div class="nr nr-end">Color<i class="sock sr sy"></i></div>
                                <div class="nr mt16p"><div class="nsel">Multiply<svg class="chev"><use href="#i-chev" /></svg></div></div>
                                <div class="nr clamp mt7p"><i class="cb-n"></i>Clamp</div>
                                <div class="nr mt11p"><i class="sock sl sg"></i><div class="fld fld-b"><span>Fac</span><span>1.000</span></div></div>
                                <div class="nr mt5p"><i class="sock sl sy"></i>Color1<div class="swatch sw-g"></div></div>
                                <div class="nr mt4p"><i class="sock sl sy"></i>Color2</div>
                            </div>
                        </div>

                        <div class="nd nd-mat">
                            <div class="nh nh24 hr"><i class="tri-nd"></i>Material Output</div>
                            <div class="pt7">
                                <div class="nr h23"><div class="nsel h23">All<svg class="chev"><use href="#i-chev" /></svg></div></div>
                                <div class="nr mt9p"><i class="sock sl sn"></i>Surface</div>
                                <div class="nr mt5p"><i class="sock sl sn"></i>Volume</div>
                                <div class="nr mt5p"><i class="sock sl sb"></i>Displacement</div>
                            </div>
                        </div>

                        <div class="mb-name">Material.001</div>
                        <div class="sidetab st-l st-n">&#8250;</div>
                        <div class="sidetab st-r st-n">&#8249;</div>
                    </div>
                </div>
            </div>

            <div class="rightcol">
                <!-- outliner -->
                <div class="area a-out">
                    <div class="hd pl9">
                        <div class="tb w30"><svg class="ic"><use href="#i-outl" /></svg><svg class="chev"><use href="#i-chev" /></svg></div>
                        <div class="tb w34 ml7"><svg class="ic"><use href="#i-disp" /></svg><svg class="chev"><use href="#i-chev" /></svg></div>
                        <div class="srch ml13"><svg class="ic-s"><use href="#i-search" /></svg></div>
                        <div class="tb w31 filt-b"><svg class="ic"><use href="#i-filter" /></svg><svg class="chev"><use href="#i-chev" /></svg></div>
                        <div class="tb w18 ml6"><svg class="ic-s"><use href="#i-newc" /></svg></div>
                    </div>
                    <div class="ol-rows">
                        <div class="ol ol-s"><svg class="ic wht"><use href="#i-coll" /></svg><span class="ml3">Scene Collection</span></div>
                        <div class="ol ol-alt ol-a"><i class="tri-d mr6"></i><div class="hl-ic"><svg class="ic-s"><use href="#i-coll" /></svg></div><span class="ml4">Collection</span><span class="ol-chk"><svg class="chev"><use href="#i-check" /></svg></span><svg class="ic ol-end"><use href="#i-eye" /></svg></div>
                        <div class="ol ol-c"><i class="tri-r"></i><svg class="ic o-plane ml7"><use href="#i-bulb" /></svg><span class="ml7 on1">Light</span><svg class="ic o-mesh ml13"><use href="#i-meshl" /></svg><svg class="ic ol-end"><use href="#i-eye" /></svg></div>
                        <div class="ol ol-alt ol-c"><i class="tri-r"></i><div class="hl-ic o-plane ml6"><svg class="ic-s"><use href="#i-tri" /></svg></div><span class="ml5 on2">Plane</span><svg class="ic o-mesh ml13"><use href="#i-mesh" /></svg><svg class="ic ol-end"><use href="#i-eye" /></svg></div>
                        <div class="ol ol-c"><i class="tri-r"></i><svg class="ic o-plane ml7"><use href="#i-tri" /></svg><span class="ml7 on3">Plane.001</span><svg class="ic o-mesh ml13"><use href="#i-mesh" /></svg><svg class="ic ol-end"><use href="#i-eye" /></svg></div>
                        <div class="ol ol-alt ol-c"><i class="tri-r"></i><svg class="ic o-plane ml7"><use href="#i-tri" /></svg><span class="ml7 on3">Plane.003</span><svg class="ic o-mesh ml13"><use href="#i-mesh" /></svg><svg class="ic ol-end"><use href="#i-eye" /></svg></div>
                        <div class="ol-line"></div>
                    </div>
                </div>

                <!-- properties -->
                <div class="area a-prop">
                    <div class="hd pl9">
                        <div class="tb w30"><svg class="ic"><use href="#i-props" /></svg><svg class="chev"><use href="#i-chev" /></svg></div>
                        <div class="srch prop-s"><svg class="ic-s"><use href="#i-search" /></svg></div>
                        <div class="tb tb-w w18 prop-c"><svg class="chev"><use href="#i-chev" /></svg></div>
                    </div>
                    <div class="propbody">
                        <div class="tabs">
                            <div class="pt pt-g"><svg class="ic"><use href="#i-tool" /></svg></div>
                            <div class="pt pt-on"><svg class="ic"><use href="#i-render" /></svg></div>
                            <div class="pt"><svg class="ic"><use href="#i-output" /></svg></div>
                            <div class="pt"><svg class="ic"><use href="#i-vlayer" /></svg></div>
                            <div class="pt"><svg class="ic"><use href="#i-scene" /></svg></div>
                            <div class="pt pt-g"><svg class="ic c-red"><use href="#i-world" /></svg></div>
                            <div class="pt"><svg class="ic c-org"><use href="#i-obj" /></svg></div>
                            <div class="pt"><svg class="ic c-blue"><use href="#i-wrench" /></svg></div>
                            <div class="pt"><svg class="ic c-blue"><use href="#i-part" /></svg></div>
                            <div class="pt"><svg class="ic c-blue"><use href="#i-phys" /></svg></div>
                            <div class="pt"><svg class="ic c-blue"><use href="#i-cons" /></svg></div>
                            <div class="pt"><svg class="ic c-tl"><use href="#i-mesh" /></svg></div>
                            <div class="pt pt-g"><svg class="ic c-red"><use href="#i-mat" /></svg></div>
                            <div class="pt"><svg class="ic c-red"><use href="#i-tex" /></svg></div>
                        </div>
                        <div class="pc">
                            <div class="ctx"><svg class="ic"><use href="#i-scene" /></svg><span>Scene</span><svg class="ic pinr"><use href="#i-pin" /></svg></div>
                            <div class="pr mt9p"><div class="lb lb-a">Render Engine</div><div class="psel sel-a">Eevee<svg class="chev"><use href="#i-chev" /></svg></div></div>

                            <div class="ph mt10p"><i class="tri-d"></i><span>Sampling</span><i class="grip"></i></div>
                            <div class="pb pb-s">
                                <div class="gr"><div class="nl">Render<br>Viewport</div><div class="numbox"><div>64</div><div>16</div></div></div>
                                <div class="pr ind-a mt6b"><div class="cka"><svg class="ic-s"><use href="#i-check" /></svg></div>Viewport Denoising</div>
                            </div>

                            <div class="ph"><i class="tri-r"></i><i class="ck"></i><span>Ambient Occlusion</span><i class="grip"></i></div>
                            <div class="ph"><i class="tri-r"></i><i class="ck"></i><span>Bloom</span><i class="grip"></i></div>
                            <div class="ph"><i class="tri-r"></i><span>Depth of Field</span><i class="grip"></i></div>
                            <div class="ph"><i class="tri-r"></i><span>Subsurface Scattering</span><i class="grip"></i></div>
                            <div class="ph"><i class="tri-r"></i><i class="ck"></i><span>Screen Space Reflections</span><i class="grip"></i></div>
                            <div class="ph"><i class="tri-r"></i><i class="ck"></i><span>Motion Blur</span><i class="grip"></i></div>
                            <div class="ph"><i class="tri-r"></i><span>Volumetrics</span><i class="grip"></i></div>
                            <div class="ph"><i class="tri-r"></i><span>Performance</span><i class="grip"></i></div>
                            <div class="ph"><i class="tri-r"></i><span>Hair</span><i class="grip"></i></div>
                            <div class="ph"><i class="tri-d"></i><span>Shadows</span><i class="grip"></i></div>
                            <div class="pb pb-h">
                                <div class="pr"><div class="lb lb-b">Cube Size</div><div class="psel sel-b">1024 px<svg class="chev"><use href="#i-chev" /></svg></div></div>
                                <div class="pr mt4b"><div class="lb lb-b">Cascade Size</div><div class="psel sel-b">1024 px<svg class="chev"><use href="#i-chev" /></svg></div></div>
                                <div class="pr ind-b mt4b"><div class="cka"><svg class="ic-s"><use href="#i-check" /></svg></div>High Bit Depth</div>
                                <div class="pr ind-b mt4b"><i class="ckoff"></i>Soft Shadows</div>
                                <div class="pr mt4b"><div class="lb lb-b">Light Threshold</div><div class="numsm">0.010</div></div>
                            </div>
                            <div class="ph"><i class="tri-r"></i><span>Indirect Lighting</span><i class="grip"></i></div>
                            <div class="ph"><i class="tri-r"></i><span>Film</span><i class="grip"></i></div>
                            <div class="ph"><i class="tri-r"></i><i class="ck"></i><span>Simplify</span><i class="grip"></i></div>
                            <div class="ph"><i class="tri-r"></i><span>Grease Pencil</span><i class="grip"></i></div>
                            <div class="ph"><i class="tri-r"></i><i class="ck"></i><span>Freestyle</span><i class="grip"></i></div>
                            <div class="ph"><i class="tri-r"></i><span>Color Management</span><i class="grip"></i></div>
                        </div>
                    </div>
                </div>
            </div>
            <div class="edge-r"></div>
        </div>

        <div class="status">
            <span class="st1">Set Active Modifier</span>
            <span class="stic"><svg class="ic"><use href="#i-mouse" /></svg></span>
            <span class="st2">Pan View</span>
            <span class="stic"><svg class="ic"><use href="#i-mouser" /></svg></span>
            <span>Context Menu</span>
            <span class="st-right">Collection | Plane | Verts:12 | Faces:3 | Tris:6 | Objects:0/4 | 2.92.0</span>
        </div>
        <div class="desk"><div class="desk-p"></div></div>
    </div>

    <script src="https://cdn.jsdelivr.net/npm/bootstrap@5.3.5/dist/js/bootstrap.bundle.min.js"></script>
</body>

</html>
